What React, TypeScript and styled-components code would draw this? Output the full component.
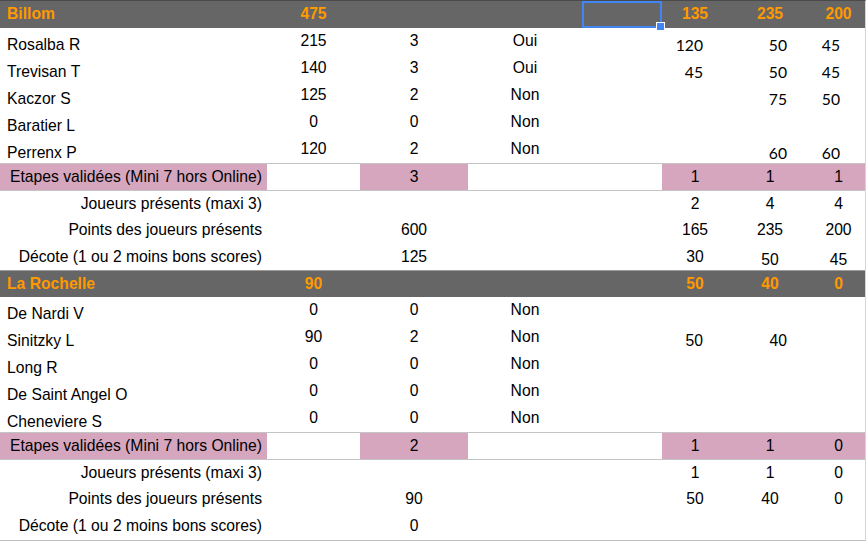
import React from 'react';
import styled, { createGlobalStyle } from 'styled-components';

type Align = 'left' | 'center' | 'right';
type VAlign = 'top' | 'center' | 'bottom';

const Global = createGlobalStyle`
  html, body { margin: 0; padding: 0; background: #ffffff; }
  body { font-family: "Liberation Sans", Arial, sans-serif; }
`;

const PINK = '#d5a6bd';
const HEAD = '#666666';
const ORANGE = '#ff9900';
const GRID = '#c4c4c4';

const Sheet = styled.div`
  width: 866px;
  box-sizing: border-box;
  border-top: 1px solid #4a4a4a;
  border-right: 1px solid #d6d6d6;
  border-bottom: 1px solid #bdbdbd;
`;

const Row = styled.div<{ $h?: number; $line?: string; $bg?: string }>`
  display: grid;
  grid-template-columns: 267px 93px 108px 114px 80px 66px 84px 53px;
  height: ${(p) => p.$h ?? 27}px;
  box-sizing: border-box;
  border-top: ${(p) => (p.$line ? `1px solid ${p.$line}` : 'none')};
  background: ${(p) => p.$bg ?? 'transparent'};
`;

const justify = { left: 'flex-start', center: 'center', right: 'flex-end' };
const items = { top: 'flex-start', center: 'center', bottom: 'flex-end' };

const Cell = styled.div<{
  $align?: Align;
  $v?: VAlign;
  $bg?: string;
  $pl?: number;
  $pr?: number;
  $cal?: boolean;
  $bold?: boolean;
  $color?: string;
}>`
  position: relative;
  display: flex;
  justify-content: ${(p) => justify[p.$align ?? 'left']};
  align-items: ${(p) => items[p.$v ?? 'center']};
  box-sizing: border-box;
  padding: 0 ${(p) => p.$pr ?? 0}px ${(p) => (p.$v === 'bottom' ? 1 : 0)}px ${(p) => p.$pl ?? 0}px;
  background: ${(p) => p.$bg ?? 'transparent'};
  font-family: ${(p) => (p.$cal ? 'Lato, "Open Sans", sans-serif' : '"Liberation Sans", Arial, sans-serif')};
  font-size: ${(p) => (p.$cal ? '15.7px' : '15.7px')};
  font-weight: ${(p) => (p.$bold ? 700 : 400)};
  color: ${(p) => p.$color ?? '#000000'};
  line-height: 1.15;
  white-space: nowrap;
`;

const Selection = styled.div`
  position: absolute;
  inset: 0 0 0 0;
  border: 2px solid #4285f4;
`;

const Handle = styled.div`
  position: absolute;
  right: -5px;
  bottom: -5px;
  width: 7px;
  height: 7px;
  background: #4285f4;
  border: 1px solid #ffffff;
`;

type HeaderProps = { name: string; total: string; f: string; g: string; h: string; selected?: boolean; line?: string };

const TeamHeader = ({ name, total, f, g, h, selected, line }: HeaderProps) => (
  <Row $bg={HEAD} $line={line}>
    <Cell $pl={7} $bold $color={ORANGE}>{name}</Cell>
    <Cell $align="center" $bold $color={ORANGE}>{total}</Cell>
    <Cell />
    <Cell />
    <Cell>
      {selected && (
        <Selection>
          <Handle />
        </Selection>
      )}
    </Cell>
    <Cell $align="center" $bold $color={ORANGE}>{f}</Cell>
    <Cell $align="center" $bold $color={ORANGE}>{g}</Cell>
    <Cell $align="center" $bold $color={ORANGE}>{h}</Cell>
  </Row>
);

type PlayerProps = { name: string; pts: string; n: string; present: string; f?: string; g?: string; h?: string; cal?: boolean };

const PlayerRow = ({ name, pts, n, present, f, g, h, cal }: PlayerProps) => (
  <Row>
    <Cell $pl={7} $v="bottom">{name}</Cell>
    <Cell $align="center">{pts}</Cell>
    <Cell $align="center">{n}</Cell>
    <Cell $align="center">{present}</Cell>
    <Cell />
    <Cell $align="right" $v="bottom" $pr={25} $cal={cal}>{f}</Cell>
    <Cell $align="right" $v="bottom" $pr={25} $cal={cal}>{g}</Cell>
    <Cell $align="right" $v="bottom" $pr={25} $cal={cal}>{h}</Cell>
  </Row>
);

const StagesRow = ({ c, f, g, h }: { c: string; f: string; g: string; h: string }) => (
  <Row $line={GRID}>
    <Cell $align="right" $pr={5} $bg={PINK}>Etapes validées (Mini 7 hors Online)</Cell>
    <Cell />
    <Cell $align="center" $bg={PINK}>{c}</Cell>
    <Cell />
    <Cell />
    <Cell $align="center" $bg={PINK}>{f}</Cell>
    <Cell $align="center" $bg={PINK}>{g}</Cell>
    <Cell $align="center" $bg={PINK}>{h}</Cell>
  </Row>
);

type SumProps = { label: string; c?: string; f?: string; g?: string; h?: string; line?: string; hgt?: number; lowGH?: boolean };

const SummaryRow = ({ label, c, f, g, h, line, hgt, lowGH }: SumProps) => (
  <Row $line={line} $h={hgt}>
    <Cell $align="right" $pr={5}>{label}</Cell>
    <Cell />
    <Cell $align="center">{c}</Cell>
    <Cell />
    <Cell />
    <Cell $align="center">{f}</Cell>
    <Cell $align="center" $v={lowGH ? 'bottom' : 'center'}>{g}</Cell>
    <Cell $align="center" $v={lowGH ? 'bottom' : 'center'}>{h}</Cell>
  </Row>
);

export default function App() {
  return (
    <>
      <Global />
      <Sheet>
        <TeamHeader name="Billom" total="475" f="135" g="235" h="200" selected />
        <PlayerRow name="Rosalba R" pts="215" n="3" present="Oui" f="120" g="50" h="45" cal />
        <PlayerRow name="Trevisan T" pts="140" n="3" present="Oui" f="45" g="50" h="45" cal />
        <PlayerRow name="Kaczor S" pts="125" n="2" present="Non" g="75" h="50" cal />
        <PlayerRow name="Baratier L" pts="0" n="0" present="Non" cal />
        <PlayerRow name="Perrenx P" pts="120" n="2" present="Non" g="60" h="60" cal />
        <StagesRow c="3" f="1" g="1" h="1" />
        <SummaryRow label="Joueurs présents (maxi 3)" f="2" g="4" h="4" line={GRID} />
        <SummaryRow label="Points des joueurs présents" c="600" f="165" g="235" h="200" />
        <SummaryRow label="Décote (1 ou 2 moins bons scores)" c="125" f="30" g="50" h="45" hgt={26} lowGH />

        <TeamHeader name="La Rochelle" total="90" f="50" g="40" h="0" line="#9a9a9a" />
        <PlayerRow name="De Nardi V" pts="0" n="0" present="Non" />
        <PlayerRow name="Sinitzky L" pts="90" n="2" present="Non" f="50" g="40" />
        <PlayerRow name="Long R" pts="0" n="0" present="Non" />
        <PlayerRow name="De Saint Angel O" pts="0" n="0" present="Non" />
        <PlayerRow name="Cheneviere S" pts="0" n="0" present="Non" />
        <StagesRow c="2" f="1" g="1" h="0" />
        <SummaryRow label="Joueurs présents (maxi 3)" f="1" g="1" h="0" line={GRID} />
        <SummaryRow label="Points des joueurs présents" c="90" f="50" g="40" h="0" />
        <SummaryRow label="Décote (1 ou 2 moins bons scores)" c="0" />
      </Sheet>
    </>
  );
}
